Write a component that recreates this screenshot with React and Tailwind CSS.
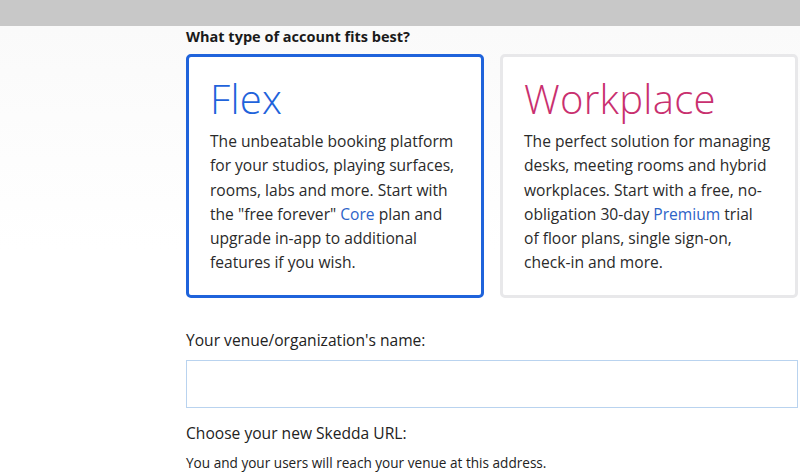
import React from 'react';

const font = { fontFamily: '"Open Sans", "Noto Sans", sans-serif' };

const AccountCard = ({ title, titleColor, selected, lines }) => (
    <div
        className={`w-[298px] h-[244px] rounded-[5px] border-[3px] bg-white px-[21px] pt-[18px] ${
            selected ? 'border-[#1f63db]' : 'border-[#e8e8ea]'
        }`}
    >
        <h3 className={`text-[40px] leading-[48px] font-light tracking-[0.3px] ${titleColor}`}>{title}</h3>
        <p className="mt-[6px] text-[15.6px] leading-[24.3px] text-[#2a2a2a] whitespace-nowrap">
            {lines.map((line, i) => (
                <React.Fragment key={i}>
                    {line}
                    {i < lines.length - 1 && <br />}
                </React.Fragment>
            ))}
        </p>
    </div>
);

const Link = ({ children }) => <span className="text-[#2d63c8]">{children}</span>;

export default function App() {
    return (
        <div className="w-[800px] h-[476px] overflow-hidden bg-white" style={font}>
            {/* top browser strip */}
            <div className="h-[26px] bg-[#c8c8c8]" />

            <div className="pl-[186px] bg-gradient-to-b from-[#fafafa] via-white to-white">
                <h2 className="pt-[1px] text-[14.5px] leading-[19px] font-bold text-[#1a1a1a]">
                    What type of account fits best?
                </h2>

                {/* account type cards */}
                <div className="mt-[8px] flex gap-[16px]">
                    <AccountCard
                        title="Flex"
                        titleColor="text-[#1f63db]"
                        selected
                        lines={[
                            'The unbeatable booking platform',
                            'for your studios, playing surfaces,',
                            'rooms, labs and more. Start with',
                            <>the "free forever" <Link>Core</Link> plan and</>,
                            'upgrade in-app to additional',
                            'features if you wish.',
                        ]}
                    />
                    <AccountCard
                        title="Workplace"
                        titleColor="text-[#c9306f]"
                        lines={[
                            'The perfect solution for managing',
                            'desks, meeting rooms and hybrid',
                            'workplaces. Start with a free, no-',
                            <>obligation 30-day <Link>Premium</Link> trial</>,
                            'of floor plans, single sign-on,',
                            'check-in and more.',
                        ]}
                    />
                </div>

                {/* venue name */}
                <label className="block mt-[32px] text-[15.6px] leading-[20px] text-[#222]">
                    Your venue/organization's name:
                </label>
                <input
                    type="text"
                    className="mt-[10px] block w-[612px] h-[48px] border border-[#b9d3ef] bg-white outline-none"
                />

                {/* url */}
                <p className="mt-[15px] text-[15.6px] leading-[20px] text-[#222]">Choose your new Skedda URL:</p>
                <p className="mt-[11px] text-[13.6px] leading-[18px] text-[#222]">
                    You and your users will reach your venue at this address.
                </p>
            </div>
        </div>
    );
}
